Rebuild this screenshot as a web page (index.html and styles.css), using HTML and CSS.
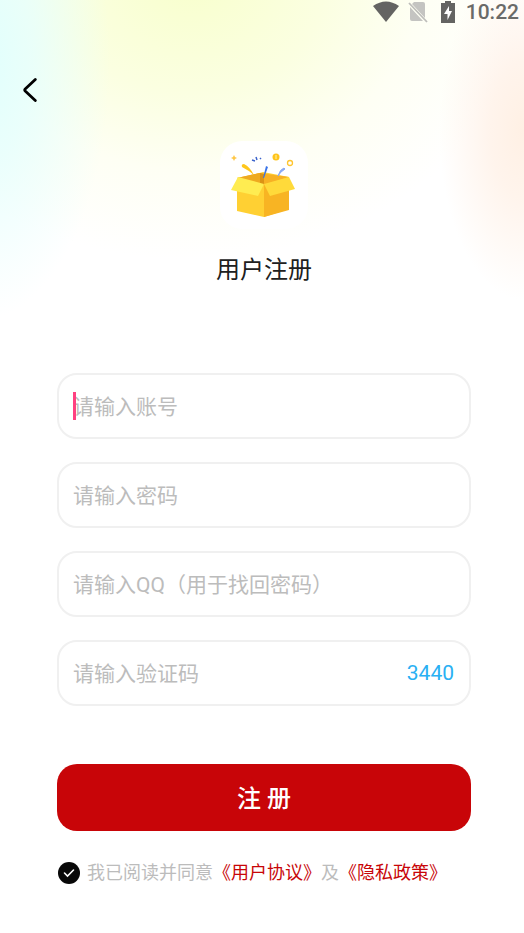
FILE: index.html
```html
<!DOCTYPE html>
<html lang="zh-CN">
<head>
<meta charset="utf-8">
<meta name="viewport" content="width=device-width, initial-scale=1">
<title>用户注册</title>
<link rel="stylesheet" href="styles.css">
</head>
<body>
<div class="page">
  <header class="status">
    <svg class="status-wifi" width="26" height="22" viewBox="0 0 26 22" aria-hidden="true"><path d="M0 5Q13-4 26 5L13 21Z" fill="#646462"/></svg>
    <svg class="status-sim" width="20" height="22" viewBox="0 0 20 22" aria-hidden="true"><path d="M6 1H15Q17 1 17 3V17L4 3ZM2 6L15 20H4Q2 20 2 18Z" fill="#c4c4c1"/><path d="M1 2L19 21" stroke="#bdbdba" stroke-width="1.8"/></svg>
    <svg class="status-battery" width="14" height="22" viewBox="0 0 14 22" aria-hidden="true"><path d="M4 0H10V2H14V22H0V2H4Z" fill="#646462"/><path d="M8 5L3 13H6.500V19L11 10H8Z" fill="#fff"/></svg>
    <time class="clock">10:22</time>
  </header>
  <nav class="nav">
    <button class="back" type="button" aria-label="返回"><svg width="14" height="24" viewBox="0 0 14 24" aria-hidden="true"><path d="M12.300 1.500L2.200 11Q1.300 12 2.200 13L12.300 22.500" fill="none" stroke="#000" stroke-width="2.800" stroke-linecap="round" stroke-linejoin="round"/></svg></button>
  </nav>
  <main class="content">
    <div class="logo">
      <svg width="68" height="68" viewBox="0 0 68 68" aria-hidden="true">
        <path d="M7 28L33 21L59 26V58L34 66L7 60Z" fill="#ffd033"/>
        <path d="M34 34L59 27V59L34 66Z" fill="#f8b423"/>
        <path d="M7 27L30 22L59 26L34 34Z" fill="#f7b124"/>
        <path d="M7 27L30 22V33Z" fill="#eeaa20"/>
        <path d="M30 22L34 23V34L30 33Z" fill="#dc9315"/>
        <path d="M8 26L34 33L28 45L1 39Z" fill="#ffec51"/>
        <path d="M34 33L59 26L65 38L40 45Z" fill="#ffda3a"/>
        <path d="M12 16Q11 13 14 13Q20 16 24 24Q18 19 12 16" fill="#ffc71c"/>
        <path d="M36 15L38 16L34 27H33Z" fill="#3973e8"/>
        <path d="M48 25Q50 18 54 17L55 18Q50 21 48 25Z" fill="#8aaaf4" stroke="#8aaaf4"/>
        <path d="M4 4L5 6L7 7L5 8L4 10L3 8L1 7L3 6Z" fill="#ffc747"/>
        <path d="M22 9L25 10M26 6L27 9M30 8L31 7" stroke="#3b63cc" stroke-width="1.500"/>
        <circle cx="46" cy="6" r="3.500" fill="#ffc41c"/><path d="M46 4V8" stroke="#fff3a8"/>
        <circle cx="60" cy="12" r="2.500" fill="none" stroke="#ffc52e" stroke-width="1.300"/>
      </svg>
    </div>
    <h1 class="title">用户注册</h1>
    <form class="form">
      <div class="fields">
        <div class="field"><span class="caret"></span><input class="input" type="text" aria-label="账号" placeholder="请输入账号"></div>
        <div class="field"><input class="input" type="password" aria-label="密码" placeholder="请输入密码"></div>
        <div class="field"><input class="input" type="text" aria-label="QQ" placeholder="请输入QQ（用于找回密码）"></div>
        <div class="field"><input class="input" type="text" aria-label="验证码" placeholder="请输入验证码"><button class="code" type="button">3440</button></div>
      </div>
      <button class="submit" type="submit">注 册</button>
      <div class="agreement">
        <input class="check" id="agree" type="checkbox" checked>
        <p class="terms"><label for="agree">我已阅读并同意</label><a class="link" href="#terms">《用户协议》</a>及<a class="link" href="#privacy">《隐私政策》</a></p>
      </div>
    </form>
  </main>
</div>
</body>
</html>
```
FILE: styles.css
```css
* { box-sizing: border-box; }

body {
  margin: 0;
  background: #fff;
  color: #202020;
  font-family: Roboto, "Noto Sans CJK SC", sans-serif;
}

button, input { font: inherit; }

button {
  padding: 0;
  border: 0;
  background: none;
  cursor: pointer;
}

.page {
  min-height: 100vh;
  background:
    radial-gradient(ellipse 85px 170px at 100% 130px, #fff0e4 0%, #fff4ec 40%, rgba(255, 248, 243, 0) 100%),
    radial-gradient(ellipse 130px 260px at -20px 60px, #e0fffd 0%, rgba(229, 255, 253, 0.8) 40%, rgba(240, 255, 253, 0) 100%),
    radial-gradient(ellipse 340px 280px at 190px -20px, #f8ffcd 0%, #fbffe1 40%, #fefff4 68%, rgba(255, 255, 255, 0) 100%),
    #fff;
}

.status {
  display: flex;
  justify-content: flex-end;
  align-items: center;
  height: 24px;
  padding-right: 5px;
  color: #6a6a68;
}

.status-sim { margin-left: 9px; }
.status-battery { margin-left: 13px; }

.clock {
  margin-left: 11px;
  font-size: 21px;
  font-weight: 500;
  line-height: 24px;
}

.nav { padding: 42px 12px 0; }

.back {
  display: grid;
  place-items: center;
  width: 36px;
  height: 48px;
}

.content { padding: 27px 53px 48px 57px; }

.logo {
  display: grid;
  place-items: center;
  width: 88px;
  height: 88px;
  margin: 0 auto;
  border-radius: 22px;
  background: #fff;
}

.title {
  margin: 24px 0 0;
  font-size: 24px;
  font-weight: 400;
  line-height: 34px;
  text-align: center;
}

.form { margin-top: 86px; }

.fields {
  display: grid;
  gap: 23px;
}

.field {
  position: relative;
  display: flex;
  align-items: center;
  height: 66px;
  padding: 0 15px 0 14px;
  border: 2px solid #f0f0f0;
  border-radius: 20px;
  background: #fff;
}

.input {
  flex: 1;
  min-width: 0;
  padding: 2px 0 0;
  border: 0;
  outline: 0;
  background: none;
  font-size: 21px;
  line-height: 32px;
}

.input::placeholder {
  color: #bcbcbc;
  opacity: 1;
}

.caret {
  position: absolute;
  left: 14px;
  width: 3px;
  height: 28px;
  background: #ff4081;
}

.code {
  color: #29b0f3;
  font-size: 21px;
}

.submit {
  width: 100%;
  height: 67px;
  padding-bottom: 2px;
  margin-top: 58px;
  border-radius: 20px;
  background: #c80508;
  color: #fff;
  font-size: 24px;
  font-weight: 500;
}

.agreement {
  display: flex;
  align-items: center;
  gap: 6px;
  margin-top: 28px;
}

.check {
  flex: none;
  appearance: none;
  width: 24px;
  height: 24px;
  margin: 0;
  background: url("data:image/svg+xml,%3Csvg xmlns='http://www.w3.org/2000/svg' viewBox='0 0 24 24'%3E%3Ccircle cx='12' cy='12' r='11' fill='%23080808'/%3E%3Cpath d='M7.500 12L10.500 15L16.500 9' fill='none' stroke='white' stroke-width='1.600' stroke-linecap='round'/%3E%3C/svg%3E") center / contain no-repeat;
}

.terms {
  margin: 0;
  color: #bcbcbc;
  font-size: 18px;
  line-height: 28px;
}

.link {
  color: #c80508;
  text-decoration: none;
}
```
